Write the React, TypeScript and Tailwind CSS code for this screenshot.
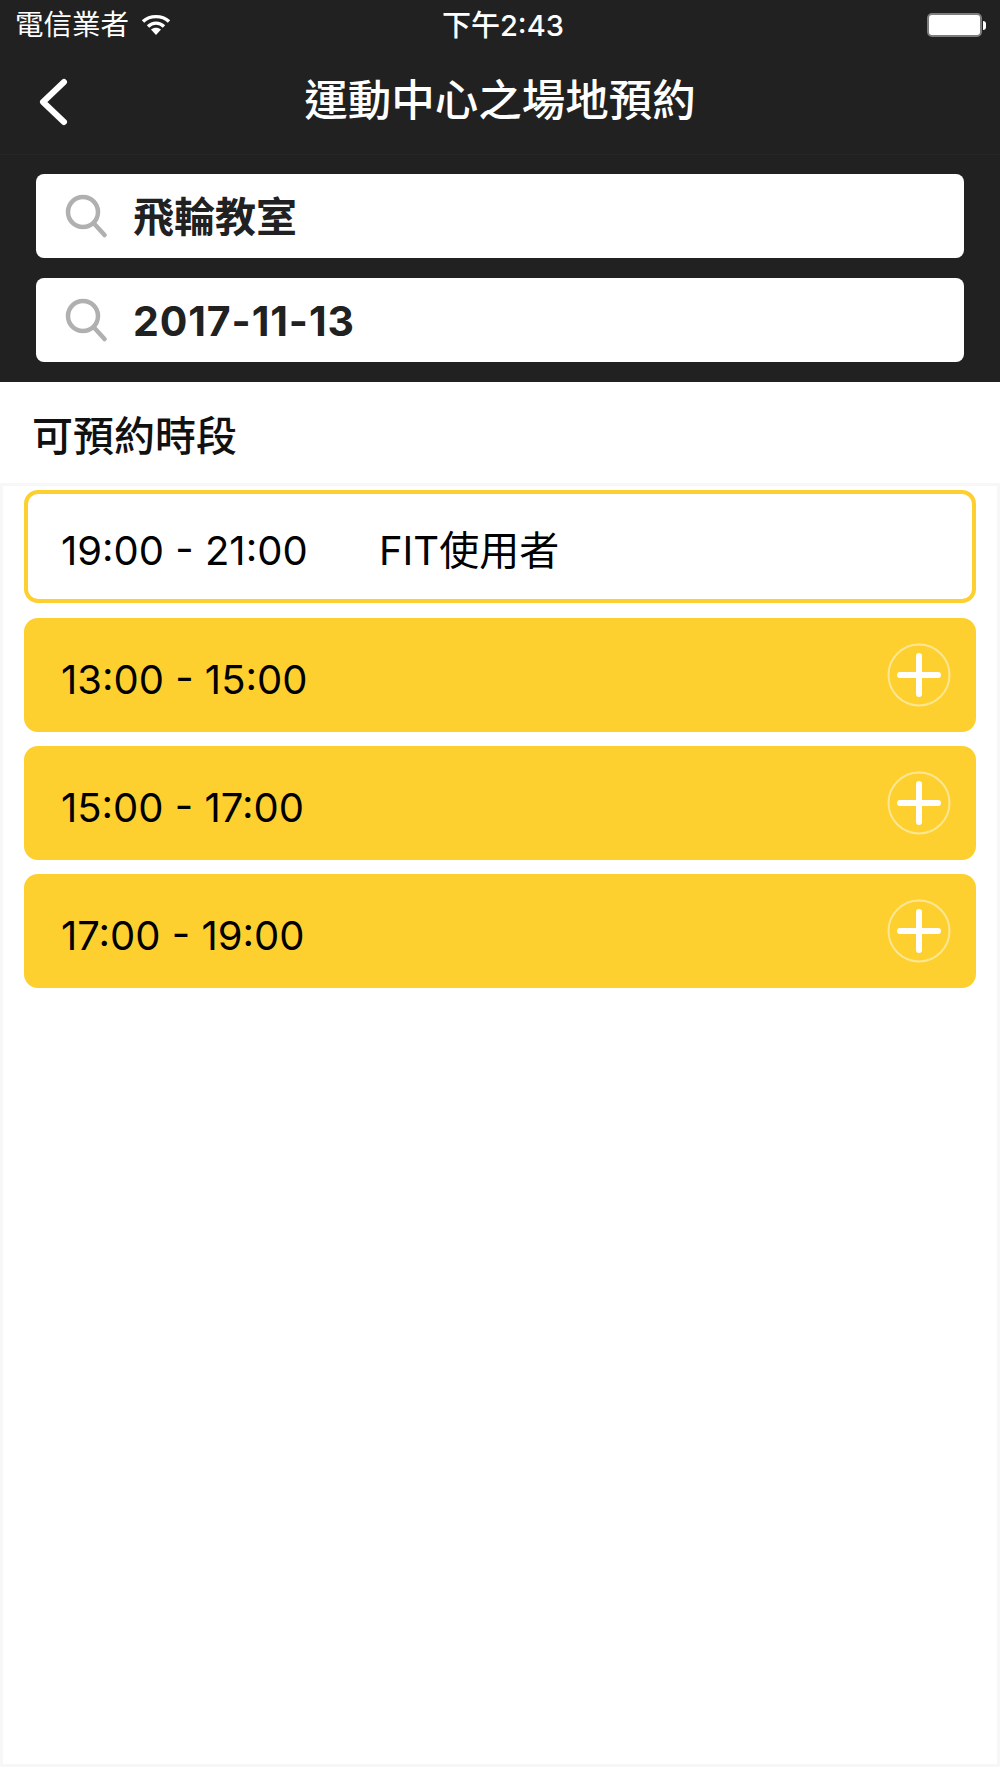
const font = "font-['Inter','Noto_Sans_CJK_TC',sans-serif]";

function SearchIcon() {
  return (
    <svg width="42" height="44" viewBox="0 0 42 44" fill="none" className="shrink-0">
      <circle cx="18" cy="18" r="15" stroke="#b0b0b0" strokeWidth="4.5" />
      <path d="M29 29.5 L39.5 41" stroke="#b0b0b0" strokeWidth="4.5" strokeLinecap="round" />
    </svg>
  );
}

function SearchBox({ text, tracked }: { text: string; tracked?: boolean }) {
  return (
    <div className="flex h-[84px] items-center rounded-[8px] bg-white pl-[29px]">
      <SearchIcon />
      <span className={`ml-[26px] mt-[3px] text-[41px] font-bold leading-none text-[#212121] ${tracked ? "tracking-[0.9px]" : ""}`}>{text}</span>
    </div>
  );
}

function PlusIcon() {
  return (
    <svg width="64" height="64" viewBox="0 0 64 64" fill="none">
      <circle cx="32" cy="32" r="30.5" stroke="#ffe792" strokeWidth="2" />
      <path d="M32 13 V51 M13 32 H51" stroke="#fff" strokeWidth="6" strokeLinecap="round" />
    </svg>
  );
}

function Slot({ time }: { time: string }) {
  return (
    <div className="flex h-[114px] items-center justify-between rounded-[14px] bg-[#fdd030] pl-[37px] pr-[25px]">
      <span className="mt-[10px] text-[40px] leading-none text-black">{time}</span>
      <PlusIcon />
    </div>
  );
}

export default function App() {
  return (
    <div className={`flex h-[1778px] w-[1000px] flex-col overflow-hidden bg-white ${font}`}>
      <div className="bg-[#212121]">
        <div className="relative flex h-[50px] items-center pl-[15px] pr-[16px] text-[28.5px] text-white">
          <span className="leading-none">電信業者</span>
          <svg width="30" height="22" viewBox="0 0 30 22" fill="white" className="ml-[12px]">
            <path d="M15 21 L10 15.5 C13 13 17 13 20 15.5 Z" />
            <path d="M2 7.5 C9 1 21 1 28 7.5" stroke="white" strokeWidth="3.4" fill="none" />
            <path d="M7 12.5 C11.5 8 18.5 8 23 12.5" stroke="white" strokeWidth="3.4" fill="none" />
          </svg>
          <span className="absolute left-[442px] font-medium leading-none text-[29px]">下午2:43</span>
          <div className="absolute left-[927px] flex items-center">
            <div className="h-[24px] w-[55px] rounded-[5px] border-2 border-[#7d7d7d] bg-white" />
            <div className="ml-[1px] h-[9px] w-[3px] rounded-r-full bg-white" />
          </div>
        </div>
        <div className="relative flex h-[105px] items-center justify-center border-b border-[#262626]">
          <svg width="32" height="48" viewBox="0 0 32 48" fill="none" className="absolute left-[38px] top-[28px]">
            <path d="M26 4 L5 24 L26 44" stroke="white" strokeWidth="6" strokeLinecap="round" strokeLinejoin="round" />
          </svg>
          <span className="mb-[2px] text-[43.5px] font-medium leading-none text-white">運動中心之場地預約</span>
        </div>
        <div className="flex flex-col gap-[20px] px-[36px] pb-[20px] pt-[19px]">
          <SearchBox text="飛輪教室" />
          <SearchBox text="2017-11-13" tracked />
        </div>
      </div>
      <div className="flex h-[101px] items-center pl-[32px]">
        <span className="mt-[8px] text-[41px] font-medium leading-none text-[#111111]">可預約時段</span>
      </div>
      <div className="mb-[11px] flex flex-1 flex-col gap-[14px] border-[3px] border-[#f7f7f7] px-[21px] pt-[4px]">
        <div className="mb-[1px] flex h-[113px] items-center rounded-[14px] border-[4px] border-[#fdd030] bg-white pl-[33px]">
          <span className="mt-[8px] w-[318px] text-[40px] leading-none text-black">19:00 - 21:00</span>
          <span className="mt-[8px] text-[40px] leading-none text-black">FIT使用者</span>
        </div>
        <Slot time="13:00 - 15:00" />
        <Slot time="15:00 - 17:00" />
        <Slot time="17:00 - 19:00" />
      </div>
    </div>
  );
}
